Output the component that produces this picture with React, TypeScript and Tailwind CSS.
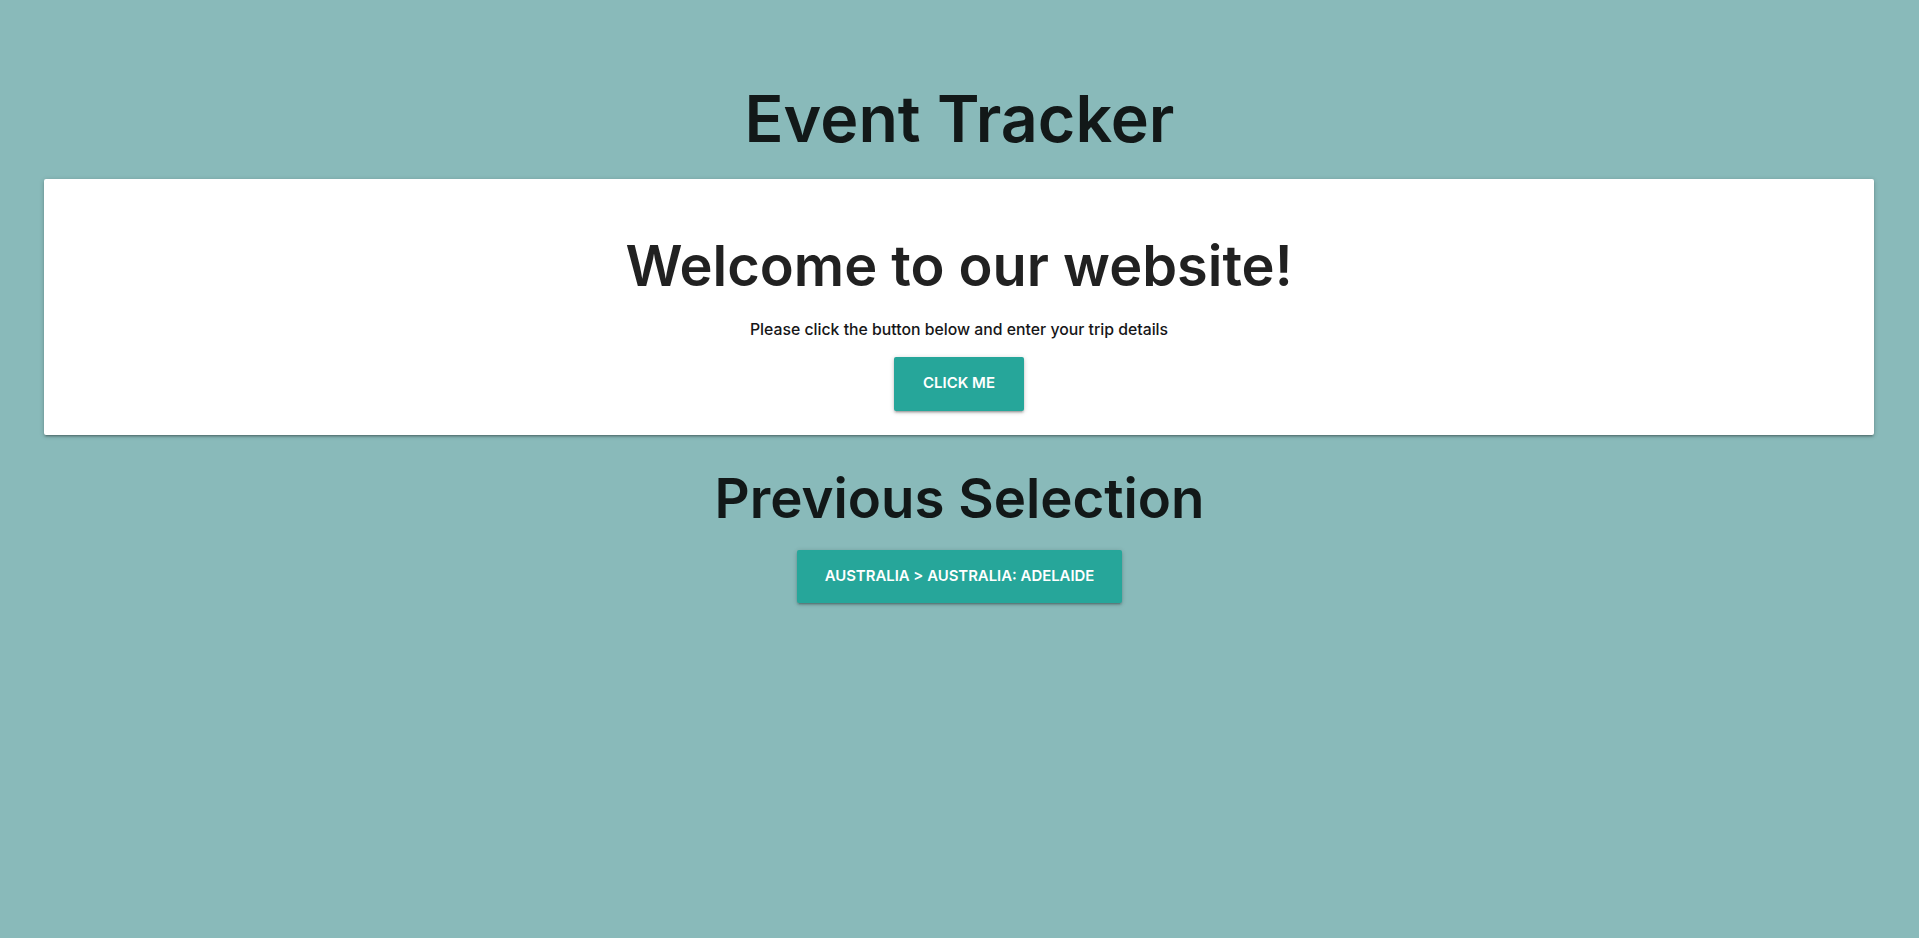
import React from "react";

const shadow =
  "shadow-[0_2px_2px_0_rgba(0,0,0,0.14),0_3px_1px_-2px_rgba(0,0,0,0.12),0_1px_5px_0_rgba(0,0,0,0.2)]";

export default function App() {
  return (
    <div className="min-h-screen bg-[#89baba] font-['Inter',sans-serif] flex flex-col items-center">
      <h1 className="mt-[87px] text-[64.5px] leading-[64.5px] font-semibold text-black/[0.87]">
        Event Tracker
      </h1>
      <div
        className={`mt-[27px] self-stretch ml-[44px] mr-[45px] bg-white ${shadow} rounded-[2px] flex flex-col items-center pt-[59px] pb-[24px]`}
      >
        <h2 className="text-[55.9px] leading-[56px] font-semibold text-black/[0.87]">
          Welcome to our website!
        </h2>
        <p className="mt-[24px] text-[15.8px] leading-[24px] font-medium text-[#161618]">
          Please click the button below and enter your trip details
        </p>
        <button
          className={`mt-[15px] h-[54px] px-[29px] bg-[#26a69a] text-white text-[15px] font-semibold uppercase rounded-[2px] ${shadow}`}
        >
          Click me
        </button>
      </div>
      <h2 className="mt-[36px] text-[54.6px] leading-[55px] font-semibold text-black/[0.87]">
        Previous Selection
      </h2>
      <button
        className={`mt-[24px] h-[53px] px-[28px] bg-[#26a69a] text-white text-[14.9px] font-semibold uppercase rounded-[2px] ${shadow}`}
      >
        Australia &gt; Australia: Adelaide
      </button>
    </div>
  );
}
